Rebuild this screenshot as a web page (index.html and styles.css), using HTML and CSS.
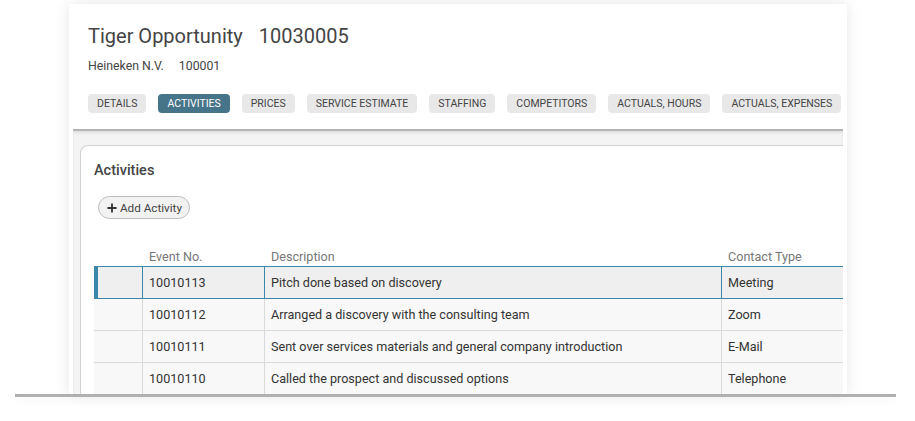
FILE: index.html
```html
<!DOCTYPE html>
<html>
<head>
<meta charset="utf-8">
<link rel="stylesheet" href="styles.css">
</head>
<body>
<div class="stage">
  <div class="card">
    <div class="header">
      <h1 class="title"><span>Tiger Opportunity</span><span class="num">10030005</span></h1>
      <div class="sub"><span>Heineken N.V.</span><span class="num2">100001</span></div>
      <div class="tabs">
        <span class="tab">DETAILS</span>
        <span class="tab active">ACTIVITIES</span>
        <span class="tab">PRICES</span>
        <span class="tab">SERVICE ESTIMATE</span>
        <span class="tab">STAFFING</span>
        <span class="tab">COMPETITORS</span>
        <span class="tab">ACTUALS, HOURS</span>
        <span class="tab">ACTUALS, EXPENSES</span>
      </div>
    </div>
    <div class="body">
      <div class="panel">
        <h2 class="ptitle">Activities</h2>
        <button class="add"><svg width="10" height="10" viewBox="0 0 10 10"><path d="M5 0.5v9M0.5 5h9" stroke="#333" stroke-width="1.8"/></svg>Add Activity</button>
        <div class="table">
          <div class="row head">
            <div class="c c1"></div>
            <div class="c c2">Event No.</div>
            <div class="c c3">Description</div>
            <div class="c c4">Contact Type</div>
          </div>
          <div class="row sel">
            <div class="c c1"></div>
            <div class="c c2">10010113</div>
            <div class="c c3">Pitch done based on discovery</div>
            <div class="c c4">Meeting</div>
          </div>
          <div class="row">
            <div class="c c1"></div>
            <div class="c c2">10010112</div>
            <div class="c c3">Arranged a discovery with the consulting team</div>
            <div class="c c4">Zoom</div>
          </div>
          <div class="row">
            <div class="c c1"></div>
            <div class="c c2">10010111</div>
            <div class="c c3">Sent over services materials and general company introduction</div>
            <div class="c c4">E-Mail</div>
          </div>
          <div class="row">
            <div class="c c1"></div>
            <div class="c c2">10010110</div>
            <div class="c c3">Called the prospect and discussed options</div>
            <div class="c c4">Telephone</div>
          </div>
        </div>
      </div>
    </div>
  </div>
  <div class="baseline"></div>
</div>
</body>
</html>
```
FILE: styles.css
```css
* { box-sizing: border-box; }
html, body { margin: 0; padding: 0; background: #fff; }
body { font-family: Roboto, "Noto Sans", sans-serif; color: #333; width: 915px; height: 421px; overflow: hidden; }

.stage { padding-top: 4px; }
.card {
  margin-left: 69px;
  width: 778px;
  height: 390px;
  overflow: hidden;
  background: #fff;
  box-shadow: 0 0 14px rgba(0,0,0,0.10);
  padding: 0 4px;
  display: flex;
  flex-direction: column;
}
.header { padding: 20px 0 0 15px; height: 125px; flex: none; }
.title { margin: 0; font-weight: 400; font-size: 20px; line-height: 24px; color: #444; }
.title .num { margin-left: 16px; }
.sub { margin-top: 11px; font-size: 12.3px; line-height: 14px; color: #444; }
.sub .num2 { margin-left: 15px; }
.tabs { display: flex; gap: 12px; margin-top: 21px; }
.tab {
  background: #e8e8e8;
  color: #444;
  font-size: 10.5px;
  height: 19px;
  line-height: 19px;
  padding: 0 9px;
  border-radius: 4px;
  white-space: nowrap;
}
.tab.active { background: #467489; color: #fff; }

.body {
  flex: 1;
  background: #f4f4f4;
  border-top: 2px solid #b4b4b4;
  box-shadow: inset 0 2px 3px rgba(0,0,0,0.08);
  padding: 14px 0 0 7px;
  overflow: hidden;
}
.panel {
  background: #fff;
  border: 1px solid #d2d2d2;
  border-right: none;
  border-radius: 8px 0 0 0;
  padding: 0 0 0 13px;
  height: 400px;
  overflow: hidden;
}
.ptitle { margin: 0; padding-top: 16px; font-size: 14.5px; font-weight: 500; line-height: 18px; color: #444; }
.add {
  margin-top: 16px;
  margin-left: 4px;
  display: flex;
  align-items: center;
  gap: 3px;
  height: 23px;
  padding: 0 7px 0 8px;
  border: 1px solid #bdbdbd;
  background: #f2f2f2;
  border-radius: 12px;
  font-family: inherit;
  font-size: 11.7px;
  color: #444;
}
.table { margin-top: 27px; width: 900px; }
.row { display: flex; height: 32px; border-bottom: 1px solid #d9d9d9; background: #f8f8f8; font-size: 12.6px; }
.row .c { flex: none; display: flex; align-items: center; padding-left: 6px; border-right: 1px solid #d9d9d9; white-space: nowrap; }
.c1 { width: 49px; }
.c2 { width: 122px; }
.c3 { width: 457px; }
.c4 { width: 140px; }
.row.head { height: 21px; background: transparent; border-bottom: 1px solid #3a87aa; color: #777; }
.row.head .c { border-right: none; align-items: flex-end; padding-bottom: 2px; }
.row.sel { background: #efefef; border-bottom: 1px solid #3a87aa; }
.row.sel .c { border-right-color: #3a87aa; }
.row.sel .c1 { border-left: 4px solid #3a87aa; }

.baseline {
  margin-left: 15px;
  width: 881px;
  height: 3px;
  background: #b0b0b0;
  box-shadow: 0 3px 8px rgba(0,0,0,0.06);
}
```
